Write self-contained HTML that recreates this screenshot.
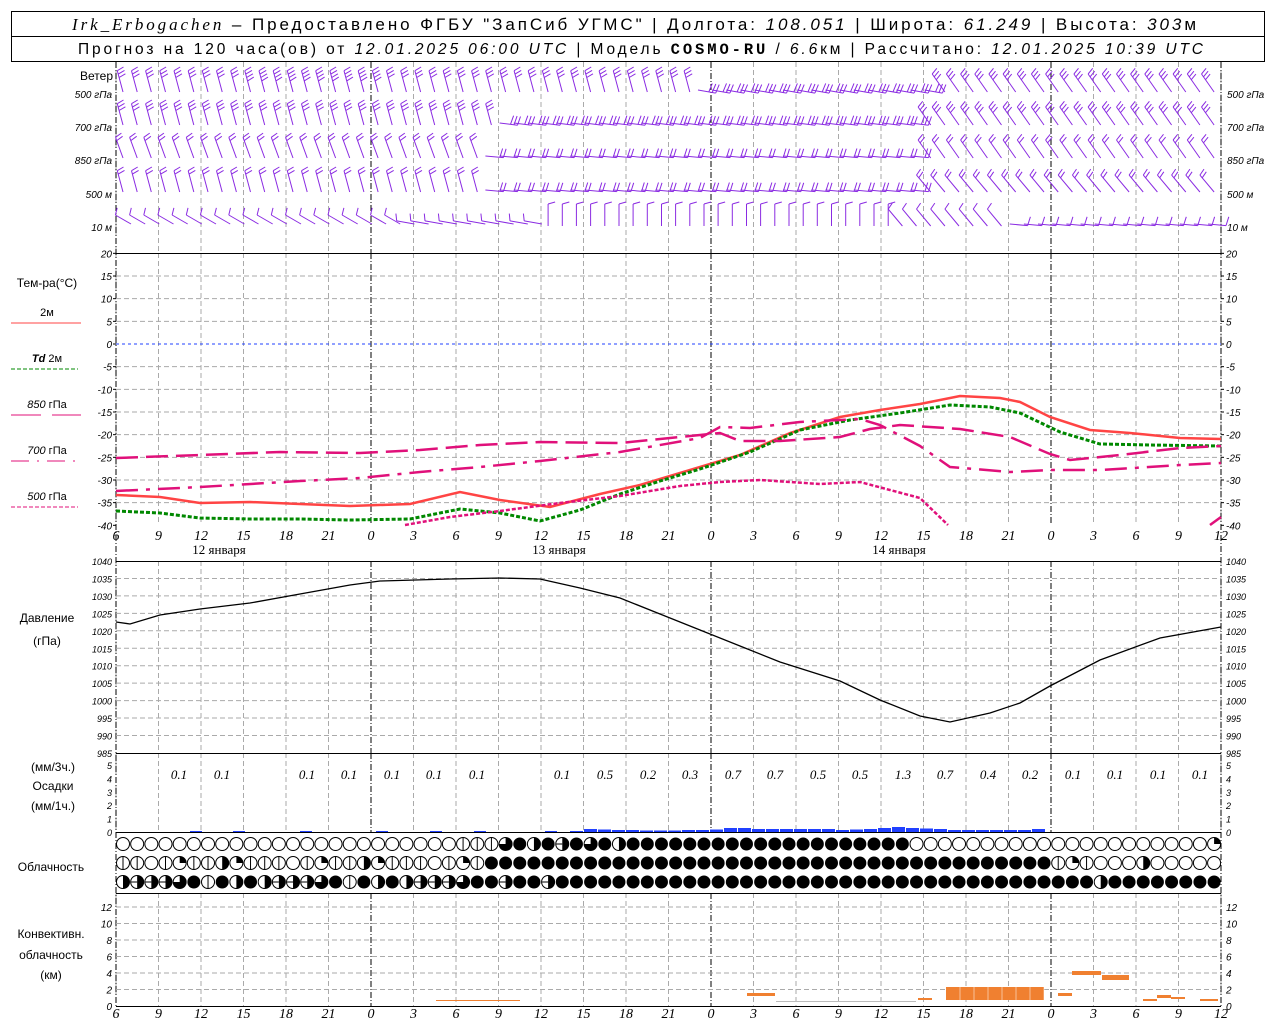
<!DOCTYPE html>
<html><head><meta charset="utf-8">
<style>
body{margin:0;background:#fff;width:1280px;height:1024px;overflow:hidden}
svg{display:block}
text{font-family:"Liberation Sans",sans-serif;font-size:11px;fill:#000}
.it{font-style:italic}
</style></head>
<body>
<svg id="s" width="1280" height="1024" xmlns="http://www.w3.org/2000/svg">
<rect x="0" y="0" width="1280" height="1024" fill="#fff"/>
<rect x="11.5" y="11.5" width="1253" height="50" fill="none" stroke="#000"/>
<line x1="11" y1="36.5" x2="1265" y2="36.5" stroke="#000"/>
<text x="72" y="30" style="font-size:17px" textLength="1124" lengthAdjust="spacing"><tspan font-family="Liberation Serif" font-style="italic">Irk_Erbogachen</tspan> – Предоставлено ФГБУ "ЗапСиб УГМС" | Долгота: <tspan font-style="italic">108.051</tspan> | Широта: <tspan font-style="italic">61.249</tspan> | Высота: <tspan font-style="italic">303</tspan>м</text>
<text x="78" y="54" style="font-size:15.5px" textLength="1125" lengthAdjust="spacing">Прогноз на 120 часа(ов) от <tspan font-style="italic">12.01.2025 06:00 UTC</tspan>  | Модель <tspan font-weight="bold" font-family="Liberation Mono">COSMO-RU</tspan> / <tspan font-style="italic">6.6</tspan>км | Рассчитано: <tspan font-style="italic">12.01.2025 10:39 UTC</tspan></text>
<g id="g"></g>
</svg>
<script>
var g=document.getElementById('g'),h='';
var L=116,R=1221,dx=42.5;
function ln(x1,y1,x2,y2,st){h+='<line x1="'+x1+'" y1="'+y1+'" x2="'+x2+'" y2="'+y2+'" '+(st||'stroke="#000"')+'/>';}
function tx(x,y,s,extra){h+='<text x="'+x+'" y="'+y+'" '+(extra||'')+'>'+s+'</text>';}
function pl(pts,st){h+='<polyline fill="none" points="'+pts+'" '+st+'/>';}
var gd='stroke="#aaa" stroke-dasharray="5,3"';
var md='stroke="#000" stroke-dasharray="6,2,1,2"';
var panels=[[62,253],[253,525],[561,753],[753,832],[893,1006]];
for(var i=0;i<=26;i++){var x=L+i*dx;var mid=(i==6||i==14||i==22);
 panels.forEach(function(p){ln(x,p[0],x,p[1],mid?md:gd);});}
ln(L,253.5,R,253.5);ln(L,561.5,R,561.5);ln(L,753.5,R,753.5);ln(L,832.5,R,832.5);ln(L,893.5,R,893.5);ln(L,1006.5,R,1006.5);
ln(L,62,L,1006,md);ln(R,62,R,1006,md);
for(var t=20;t>=-40;t-=5){var y=344-t*4.533;if(t!=20&&t!=-40)ln(L,y,R,y,t==0?'stroke="#2040ff" stroke-dasharray="3,3"':gd);
 tx(112,y+4,t,'text-anchor="end" class="it" style="font-size:10px"');tx(1226,y+4,t,'class="it" style="font-size:10px"');
 ln(L-3,y,L,y);ln(R,y,R+3,y);}
for(var p=1040;p>=985;p-=5){var y=561+(1040-p)*3.49;if(p!=1040&&p!=985)ln(L,y,R,y,gd);
 tx(112,y+4,p,'text-anchor="end" class="it" style="font-size:9px"');tx(1226,y+4,p,'class="it" style="font-size:9px"');}
for(var q=0;q<=5;q++){var y=832-q*13.4;tx(112,y+4,q,'text-anchor="end" class="it" style="font-size:9px"');tx(1226,y+4,q,'class="it" style="font-size:9px"');}
for(var c=0;c<=12;c+=2){var y=1006-c*8.25;if(c>0)ln(L,y,R,y,gd);tx(112,y+4,c,'text-anchor="end" class="it" style="font-size:10px"');tx(1226,y+4,c,'class="it" style="font-size:10px"');}
var hrs=[6,9,12,15,18,21,0,3,6,9,12,15,18,21,0,3,6,9,12,15,18,21,0,3,6,9,12];
for(var i=0;i<27;i++){var x=L+i*dx;tx(x,540,hrs[i],'text-anchor="middle" class="it" style="font-size:14px;font-family:Liberation Serif"');tx(x,1018,hrs[i],'text-anchor="middle" class="it" style="font-size:14px;font-family:Liberation Serif"');}
tx(219,554,'12 января','text-anchor="middle" style="font-size:13px;font-family:Liberation Serif"');
tx(559,554,'13 января','text-anchor="middle" style="font-size:13px;font-family:Liberation Serif"');
tx(899,554,'14 января','text-anchor="middle" style="font-size:13px;font-family:Liberation Serif"');
tx(113,80,'Ветер','text-anchor="end" style="font-size:12px"');
var wl=[['500 гПа',98],['700 гПа',131],['850 гПа',164],['500 м',198],['10  м',231]];
wl.forEach(function(w){tx(112,w[1],w[0],'text-anchor="end" class="it" style="font-size:10px"');tx(1227,w[1],w[0],'class="it" style="font-size:10px"');});
tx(47,287,'Тем-ра(°C)','text-anchor="middle" style="font-size:12px"');
tx(47,316,'2м','text-anchor="middle"');ln(11,323,81,323,'stroke="#f44"');
tx(47,362,'<tspan class="it" font-weight="bold">Td</tspan>  2м','text-anchor="middle"');ln(11,369,78,369,'stroke="#080" stroke-dasharray="4,2"');
tx(47,408,'<tspan class="it">850</tspan> гПа','text-anchor="middle"');ln(11,415,41,415,'stroke="#e0107a"');ln(52,415,81,415,'stroke="#e0107a"');
tx(47,454,'<tspan class="it">700</tspan> гПа','text-anchor="middle"');ln(11,461,77,461,'stroke="#e0107a" stroke-dasharray="18,8,2,8"');
tx(47,500,'<tspan class="it">500</tspan> гПа','text-anchor="middle"');ln(11,507,78,507,'stroke="#e0107a" stroke-dasharray="4,2"');
tx(47,622,'Давление','text-anchor="middle" style="font-size:12px"');tx(47,645,'(гПа)','text-anchor="middle" style="font-size:12px"');
tx(53,771,'(мм/3ч.)','text-anchor="middle" style="font-size:12px"');tx(53,790,'Осадки','text-anchor="middle" style="font-size:12px"');tx(53,810,'(мм/1ч.)','text-anchor="middle" style="font-size:12px"');
tx(51,871,'Облачность','text-anchor="middle" style="font-size:12px"');
tx(51,938,'Конвективн.','text-anchor="middle" style="font-size:12px"');tx(51,959,'облачность','text-anchor="middle" style="font-size:12px"');tx(51,979,'(км)','text-anchor="middle" style="font-size:12px"');
pl('116,495 160,497 200,503 250,502 300,504 350,506 410,504 460,492 500,500 550,507 600,494 640,485 690,470 740,455 790,433 840,417 880,410 920,404 960,396 1000,398 1020,402 1050,417 1090,430 1130,433 1180,438 1221,439','stroke="#f44" stroke-width="2.5"');
pl('116,511 160,513 200,518 250,519 300,519 350,520 410,519 460,509 500,513 540,521 580,510 620,494 660,481 700,469 750,452 800,430 850,420 900,413 950,405 990,407 1020,413 1060,432 1100,444 1150,445 1221,446','stroke="#080" stroke-width="3" stroke-dasharray="4,2"');
pl('116,458 200,455 280,452 360,453 420,450 480,445 540,442 620,443 700,435 720,433 740,441 780,441 840,437 870,429 900,425 960,429 1010,437 1050,454 1070,460 1120,455 1180,448 1221,446','stroke="#e0107a" stroke-width="2.5" stroke-dasharray="22,8"');
pl('116,491 200,487 300,481 360,478 420,472 480,467 540,461 620,452 700,438 720,427 750,428 800,422 860,419 880,425 920,446 950,467 1010,472 1050,470 1100,470 1180,465 1221,463','stroke="#e0107a" stroke-width="2.5" stroke-dasharray="22,8,4,8"');
pl('405,525 450,517 500,511 560,503 620,496 680,486 720,482 760,480 820,484 860,482 890,490 920,498 948,525','stroke="#e0107a" stroke-width="2.5" stroke-dasharray="4,2"');
pl('1210,525 1221,517','stroke="#e0107a" stroke-width="2.5"');
pl('116,622 130,624 160,615 200,609 250,603 300,594 350,585 380,581 450,579 500,578 540,579 580,588 620,598 660,614 700,630 740,646 780,662 840,681 880,700 920,716 950,722 990,713 1020,703 1050,686 1100,660 1160,638 1221,627','stroke="#000" stroke-width="1.3"');
// wind barbs
var rows=[80,113,146,180,214];
function ang(r,x){
 if(r==0){if(x<700)return -15;if(x<940)return 100;return -35;}
 if(r==1){if(x<500)return -15;if(x<930)return 97;return -35;}
 if(r==2){if(x<480)return -20;if(x<930)return 95;return -35;}
 if(r==3){if(x<480)return -15;if(x<930)return 95;return -40;}
 if(x<400)return -60;if(x<540)return -80;if(x<900)return 0;if(x<1010)return -40;return 95;}
function nb(r,x){if(r==4)return 1;if(r==0&&x>240&&x<380)return 4;return (r<2)?3:2;}
var pc='stroke="#8a2be2"';
for(var r=0;r<5;r++){for(var i=0;i<78;i++){var x=123+i*14.17;var A=ang(r,x);var a=A*Math.PI/180;
 var ux=Math.sin(a),uy=-Math.cos(a);var bx,by,len=22;
 var horiz=Math.abs(A)>85;
 if(horiz){bx=x-6;by=rows[r]+10;len=18;}else if(Math.abs(A)>50){bx=x+8;by=rows[r]+10;len=18;}else{bx=x;by=rows[r]+12;}
 var tx2=bx+ux*len,ty2=by+uy*len;ln(bx.toFixed(1),by.toFixed(1),tx2.toFixed(1),ty2.toFixed(1),pc);
 var px=Math.cos(a),py=Math.sin(a);if(horiz){px=-px;py=-py;}
 var n=nb(r,x);var bl=horiz?9:7;
 for(var k=0;k<n;k++){var sx=tx2-ux*k*3.5,sy=ty2-uy*k*3.5;ln(sx.toFixed(1),sy.toFixed(1),(sx+px*bl+ux*2).toFixed(1),(sy+py*bl+uy*2).toFixed(1),pc);}}}
var pn=[[179,'0.1'],[222,'0.1'],[307,'0.1'],[349,'0.1'],[392,'0.1'],[434,'0.1'],[477,'0.1'],[562,'0.1'],[605,'0.5'],[648,'0.2'],[690,'0.3'],[733,'0.7'],[775,'0.7'],[818,'0.5'],[860,'0.5'],[903,'1.3'],[945,'0.7'],[988,'0.4'],[1030,'0.2'],[1073,'0.1'],[1115,'0.1'],[1158,'0.1'],[1200,'0.1']];
pn.forEach(function(p){tx(p[0],779,p[1],'text-anchor="middle" class="it" style="font-size:13px;font-family:Liberation Serif"');});
var pb=[[570,1],[584,3],[598,2.5],[612,2],[626,2],[640,1.5],[654,1.5],[668,1.5],[682,2],[696,2],[710,2.5],[724,4],[738,4],[752,3],[766,3],[780,3],[794,3],[808,3],[822,3],[836,2],[850,2.5],[864,3],[878,4],[892,5],[906,4],[920,3.5],[934,3],[948,2],[962,2],[976,2],[990,2],[1004,2],[1018,2],[1032,3]];
pb.forEach(function(b){h+='<rect x="'+b[0]+'" y="'+(832-b[1])+'" width="13" height="'+b[1]+'" fill="#2040ff"/>';});
[[190,1],[233,1],[300,1],[376,1],[430,1],[474,1],[545,1]].forEach(function(b){h+='<rect x="'+b[0]+'" y="831" width="12" height="1" fill="#2040ff"/>';});
function circ(cx,cy,t){var r=6.5;var s='';
 if(t==8){s='<circle cx="'+cx+'" cy="'+cy+'" r="'+r+'" fill="#000"/>';}
 else{s='<circle cx="'+cx+'" cy="'+cy+'" r="'+r+'" fill="#fff" stroke="#000"/>';
  if(t==1)s+='<line x1="'+cx+'" y1="'+(cy-r)+'" x2="'+cx+'" y2="'+(cy+r)+'" stroke="#000"/>';
  if(t==4)s+='<path d="M'+cx+','+(cy-r)+' A'+r+','+r+' 0 0 1 '+cx+','+(cy+r)+'Z" fill="#000"/>';
  if(t==2)s+='<path d="M'+cx+','+cy+' L'+cx+','+(cy-r)+' A'+r+','+r+' 0 0 1 '+(cx+r)+','+cy+'Z" fill="#000"/>';
  if(t==6)s+='<path d="M'+cx+','+cy+' L'+cx+','+(cy-r)+' A'+r+','+r+' 0 1 1 '+(cx-r)+','+cy+'Z" fill="#000"/>';
  if(t==5)s+='<path d="M'+cx+','+(cy-r)+' A'+r+','+r+' 0 0 1 '+cx+','+(cy+r)+'Z" fill="#000"/><line x1="'+(cx-r)+'" y1="'+cy+'" x2="'+cx+'" y2="'+cy+'" stroke="#000"/>';}
 h+=s;}
for(var i=0;i<78;i++){var cx=123+i*14.17;var t1,t2,t3;
 t1=(cx<505)?((cx>450)?1:0):(cx<915?8:0);if(cx>505&&cx<640&&i%2)t1=[6,5,4][i%3];if(cx>1210)t1=2;
 t2=(cx<480)?[1,1,0,1,2,1,1,4,2,1][i%10]:(cx<1050?8:[4,1,2,1,0][i%5]);if(cx>1090)t2=0;if(cx>1130&&cx<1150)t2=4;
 t3=(cx<470)?[4,5,5,5,6,8,1,8,4,8][i%10]:8;if(cx>470&&cx<560&&i%3==0)t3=5;if(cx>1090&&cx<1110)t3=4;
 circ(cx,844,t1);circ(cx,863,t2);circ(cx,882,t3);}
var oc='#f08030';
h+='<rect x="436" y="1000" width="84" height="1" fill="'+oc+'"/>';
h+='<rect x="747" y="993" width="28" height="3" fill="'+oc+'"/>';
h+='<rect x="776" y="1001" width="140" height="1" fill="#bbb"/>';
h+='<rect x="918" y="998" width="14" height="2" fill="'+oc+'"/>';
h+='<rect x="946" y="987" width="98" height="13" fill="'+oc+'"/>';
for(var k=0;k<7;k++){ln(960+k*14,987,960+k*14,1000,'stroke="#fff" stroke-opacity="0.5"');}
h+='<rect x="1058" y="993" width="14" height="3" fill="'+oc+'"/>';
h+='<rect x="1072" y="971" width="29" height="4" fill="'+oc+'"/>';
h+='<rect x="1102" y="975" width="27" height="5" fill="'+oc+'"/>';
h+='<rect x="1143" y="999" width="14" height="2" fill="'+oc+'"/>';
h+='<rect x="1157" y="995" width="14" height="3" fill="'+oc+'"/>';
h+='<rect x="1171" y="997" width="14" height="2" fill="'+oc+'"/>';
h+='<rect x="1200" y="999" width="18" height="2" fill="'+oc+'"/>';
g.innerHTML=h;
</script>
</body></html>
